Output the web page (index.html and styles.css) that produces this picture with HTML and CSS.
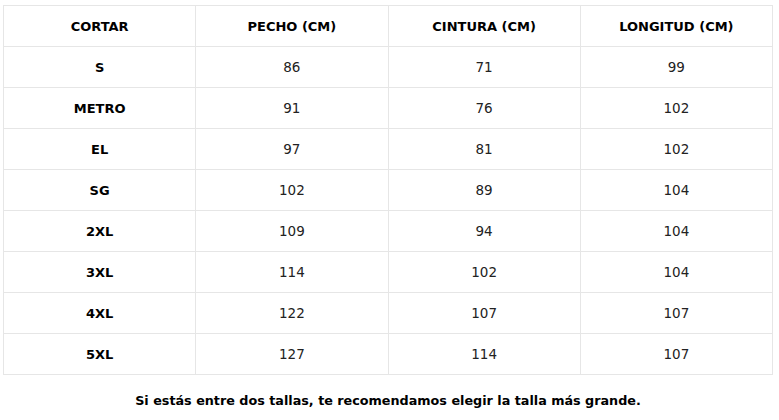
FILE: index.html
```html
<!DOCTYPE html>
<html lang="es">
<head>
<meta charset="utf-8">
<link rel="stylesheet" href="styles.css">
</head>
<body>
<div class="wrap">
  <table class="sizes">
    <thead>
      <tr><th>CORTAR</th><th>PECHO (CM)</th><th>CINTURA (CM)</th><th>LONGITUD (CM)</th></tr>
    </thead>
    <tbody>
      <tr><th>S</th><td>86</td><td>71</td><td>99</td></tr>
      <tr><th>METRO</th><td>91</td><td>76</td><td>102</td></tr>
      <tr><th>EL</th><td>97</td><td>81</td><td>102</td></tr>
      <tr><th>SG</th><td>102</td><td>89</td><td>104</td></tr>
      <tr><th>2XL</th><td>109</td><td>94</td><td>104</td></tr>
      <tr><th>3XL</th><td>114</td><td>102</td><td>104</td></tr>
      <tr><th>4XL</th><td>122</td><td>107</td><td>107</td></tr>
      <tr><th>5XL</th><td>127</td><td>114</td><td>107</td></tr>
    </tbody>
  </table>
  <p class="note">Si estás entre dos tallas, te recomendamos elegir la talla más grande.</p>
</div>
</body>
</html>
```
FILE: styles.css
```css
html, body {
  margin: 0;
  padding: 0;
  background: #fff;
}
body {
  font-family: "DejaVu Sans", sans-serif;
  color: #111;
}
.wrap {
  padding: 5px 6px 0 3px;
}
.sizes {
  width: 770px;
  border-collapse: collapse;
  table-layout: fixed;
}
.sizes th, .sizes td {
  border: 1px solid #e6e6e6;
  height: 40px;
  padding: 0;
  text-align: center;
  vertical-align: middle;
  font-size: 13px;
}
.sizes th {
  font-weight: bold;
  color: #000;
}
.sizes td {
  font-weight: normal;
  font-size: 13.5px;
  color: #222;
}
.note {
  margin: 18px 0 0;
  text-align: center;
  font-weight: bold;
  font-size: 12.75px;
  color: #000;
}
```
